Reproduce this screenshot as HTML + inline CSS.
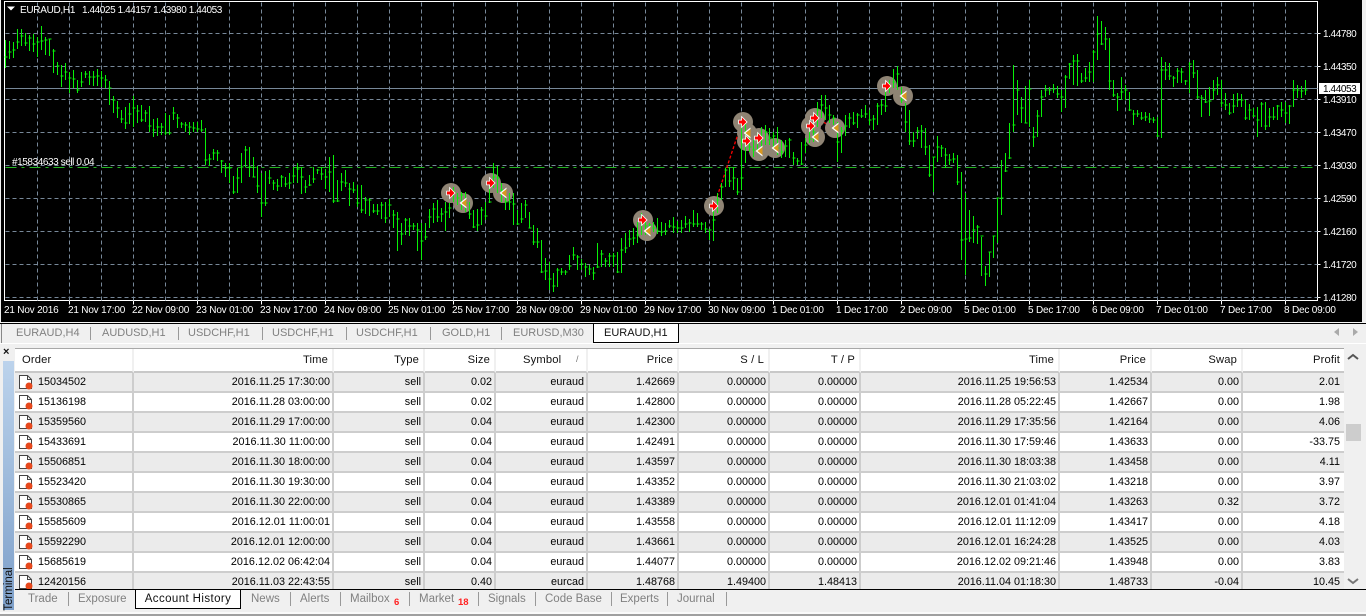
<!DOCTYPE html>
<html><head><meta charset="utf-8"><style>
html,body{margin:0;padding:0;width:1366px;height:616px;overflow:hidden;background:#f0f0f0;font-family:"Liberation Sans",sans-serif;position:relative}
.a{position:absolute}
.tt{position:absolute;top:325px;height:16px;line-height:16px;font-size:11px;color:#808080;white-space:nowrap}
.sp{position:absolute;width:1px;background:#999}
.bt{position:absolute;top:591px;height:16px;line-height:16px;font-size:11.5px;color:#808080;white-space:nowrap}
.red{position:absolute;color:#f22;font-weight:bold;font-size:9.5px;line-height:10px;top:598px}
table{border-collapse:separate;border-spacing:0;table-layout:fixed;font-size:10.8px;color:#000}
th{height:22px;font-weight:normal;text-align:right;padding:0 4px 0 0;border-right:2px solid #f0f0f0;border-bottom:2px solid #c8c8c8;box-sizing:content-box;font-size:11.2px;color:#111;background:#fff;letter-spacing:.15px;white-space:nowrap}
td{height:18px;line-height:18px;padding:0 2px 0 0;text-align:right;border-right:2px solid #cdcdcd;border-bottom:2px solid #cdcdcd;white-space:nowrap;overflow:hidden}
tr:nth-child(odd) td{background:#ebebeb}
tr:nth-child(even) td{background:#fff}
td:first-child{text-align:left;padding-left:23px;position:relative}
td svg{position:absolute;left:3px;top:1px}
</style></head><body>
<svg class="a" style="left:0;top:0" width="1366" height="324" viewBox="0 0 1366 324" font-family="'Liberation Sans',sans-serif">
<defs>
<g id="r"><path d="M-4-1.5h3v-3l4.5 4.5-4.5 4.5v-3h-3z" fill="#f00" stroke="#fff" stroke-width="1.6" paint-order="stroke"/></g>
<g id="o"><path d="M3.5-5.5-3.5 0 3.5 5.5z" fill="#fff"/><path d="M3.5-4-1.5 0 3.5 4z" fill="#d9981f"/></g>
</defs>
<rect x="1" y="0" width="1361" height="322" fill="#000"/>
<rect x="0" y="322" width="1366" height="1" fill="#f4f4f4"/>
<rect x="0" y="323" width="1366" height="1" fill="#000"/>
<g transform="translate(.5 .5)" fill="none">
<path d="M4 1H1317V300H4ZM69 300v4M133 300v4M197 300v4M261 300v4M325 300v4M389 300v4M453 300v4M517 300v4M581 300v4M645 300v4M709 300v4M773 300v4M837 300v4M901 300v4M965 300v4M1029 300v4M1093 300v4M1157 300v4M1221 300v4M1285 300v4M1317 33h3M1317 66h3M1317 99h3M1317 132h3M1317 165h3M1317 198h3M1317 231h3M1317 264h3M1317 297h3" stroke="#fff"/>
<path d="M5 33H1317M5 66H1317M5 99H1317M5 132H1317M5 165H1317M5 198H1317M5 231H1317M5 264H1317M5 297H1317M37 2V300M69 2V300M101 2V300M133 2V300M165 2V300M197 2V300M229 2V300M261 2V300M293 2V300M325 2V300M357 2V300M389 2V300M421 2V300M453 2V300M485 2V300M517 2V300M549 2V300M581 2V300M613 2V300M645 2V300M677 2V300M709 2V300M741 2V300M773 2V300M805 2V300M837 2V300M869 2V300M901 2V300M933 2V300M965 2V300M997 2V300M1029 2V300M1061 2V300M1093 2V300M1125 2V300M1157 2V300M1189 2V300M1221 2V300M1253 2V300M1285 2V300" stroke="#778899" stroke-dasharray="4 3"/>
<path d="M5 88H1317" stroke="#778899"/>
<path d="M5 167H1317" stroke="#22b522" stroke-dasharray="11 5 3 5"/>
</g>
<path d="M714 206 742 122M747 141 759 151M815 118 835 128M887 86 903 96M451 193 463 203M491 183 503 193M643 220 647 231M742 122 747 133M759 138 775 148" fill="none" stroke="#f00" stroke-width="1.3" stroke-dasharray="3 2"/>
<g fill="#8f8474"><circle cx="451" cy="193" r="10"/><circle cx="463" cy="203" r="10"/><circle cx="491" cy="183" r="10"/><circle cx="503" cy="193" r="10"/><circle cx="643" cy="220" r="10"/><circle cx="647" cy="231" r="10"/><circle cx="714" cy="206" r="10"/><circle cx="743" cy="122" r="10"/><circle cx="747" cy="133" r="10"/><circle cx="747" cy="141" r="10"/><circle cx="759" cy="138" r="10"/><circle cx="759" cy="151" r="10"/><circle cx="775" cy="148" r="10"/><circle cx="815" cy="118" r="10"/><circle cx="811" cy="126" r="10"/><circle cx="815" cy="137" r="10"/><circle cx="835" cy="128" r="10"/><circle cx="887" cy="86" r="10"/><circle cx="903" cy="96" r="10"/></g>
<path transform="translate(.5 0)" fill="none" stroke="#08f008" d="M5 40V68M4 57h3M9 41V59M8 52h3M13 42V58M12 50h3M17 29V49M16 42h3M21 29V46M20 36h3M25 33V46M24 43h3M29 35V51M28 38h3M33 34V52M32 44h3M37 37V57M36 42h3M41 26V50M40 41h3M45 37V55M44 40h3M49 39V56M48 39h3M53 49V73M52 51h3M57 62V75M56 66h3M61 65V87M60 76h3M65 63V80M64 72h3M69 72V93M68 78h3M73 70V88M72 79h3M77 80V93M76 90h3M81 72V87M80 82h3M85 71V78M84 74h3M89 71V85M88 77h3M93 71V86M92 77h3M97 69V86M96 76h3M101 71V87M100 78h3M105 75V88M104 80h3M109 81V105M108 88h3M113 96V113M112 100h3M117 101V118M116 108h3M121 110V123M120 119h3M125 107V129M124 123h3M129 103V124M128 114h3M133 96V127M132 108h3M137 105V123M136 111h3M141 105V122M140 120h3M145 110V122M144 113h3M149 106V132M148 126h3M153 119V137M152 130h3M157 118V136M156 127h3M161 123V135M160 127h3M165 113V135M164 133h3M169 115V135M168 133h3M173 107V120M172 113h3M177 114V128M176 118h3M181 122V128M180 124h3M185 122V132M184 125h3M189 122V135M188 127h3M193 122V132M192 128h3M197 122V132M196 129h3M201 120V132M200 130h3M205 128V165M204 160h3M209 154V166M208 159h3M213 149V160M212 153h3M217 150V161M216 153h3M221 160V173M220 161h3M225 163V177M224 168h3M229 163V183M228 168h3M233 176V194M232 192h3M237 168V193M236 178h3M241 153V183M240 167h3M245 146V167M244 150h3M249 147V177M248 167h3M253 157V177M252 177h3M257 166V193M256 186h3M261 173V217M260 203h3M265 171V206M264 203h3M269 170V184M268 178h3M273 180V190M272 183h3M277 179V191M276 186h3M281 175V187M280 177h3M285 177V187M284 184h3M289 173V189M288 183h3M293 167V183M292 176h3M297 163V183M296 169h3M301 167V194M300 177h3M305 180V193M304 187h3M309 175V186M308 185h3M313 167V183M312 179h3M317 169V174M316 170h3M321 167V180M320 174h3M325 169V189M324 177h3M329 157V192M328 172h3M333 155V203M332 201h3M337 180V202M336 201h3M341 173V191M340 182h3M345 170V187M344 183h3M349 183V206M348 189h3M353 182V193M352 190h3M357 185V207M356 203h3M361 185V213M360 210h3M365 197V214M364 200h3M369 198V216M368 200h3M373 204V213M372 211h3M377 204V215M376 211h3M381 202V219M380 205h3M385 202V223M384 218h3M389 199V217M388 205h3M393 210V228M392 215h3M397 212V251M396 219h3M401 223V245M400 234h3M405 218V235M404 220h3M409 218V236M408 226h3M413 223V230M412 226h3M417 223V251M416 230h3M421 223V260M420 241h3M425 223V240M424 237h3M429 209V228M428 217h3M433 203V223M432 209h3M437 200V222M436 217h3M441 208V222M440 214h3M445 202V231M444 212h3M449 203V218M448 208h3M453 187V202M452 192h3M457 193V205M456 198h3M461 192V210M460 195h3M465 192V212M464 203h3M469 202V219M468 214h3M473 210V228M472 227h3M477 209V231M476 225h3M481 207V225M480 210h3M485 202V220M484 216h3M489 183V203M488 202h3M493 163V188M492 177h3M497 166V193M496 178h3M501 183V202M500 190h3M505 193V210M504 202h3M509 193V210M508 202h3M513 193V225M512 204h3M517 210V225M516 224h3M521 203V223M520 219h3M525 200V218M524 205h3M529 212V228M528 228h3M533 225V245M532 242h3M537 228V248M536 242h3M541 240V273M540 272h3M545 258V280M544 271h3M549 262V290M548 279h3M553 273V292M552 286h3M557 268V287M556 270h3M561 268V275M560 272h3M565 270V275M564 272h3M569 255V270M568 266h3M573 247V260M572 255h3M577 255V270M576 257h3M581 259V270M580 264h3M585 263V277M584 267h3M589 265V275M588 269h3M593 267V280M592 273h3M597 243V268M596 267h3M601 250V267M600 254h3M605 258V267M604 261h3M609 253V267M608 256h3M613 253V267M612 256h3M617 252V273M616 272h3M621 238V273M620 250h3M625 233V253M624 248h3M629 230V247M628 239h3M633 228V245M632 238h3M637 222V243M636 235h3M641 213V235M640 224h3M645 222V235M644 226h3M649 223V233M648 225h3M653 222V232M652 228h3M657 218V234M656 231h3M661 222V236M660 232h3M665 223V235M664 231h3M669 220V228M668 226h3M673 217V233M672 227h3M677 221V233M676 228h3M681 220V233M680 228h3M685 216V228M684 224h3M689 219V232M688 223h3M693 210V227M692 224h3M697 213V227M696 224h3M701 222V230M700 224h3M705 222V233M704 229h3M709 229V240M708 230h3M713 207V241M712 220h3M717 193V213M716 200h3M721 183V200M720 187h3M725 168V187M724 170h3M729 167V187M728 181h3M733 167V190M732 178h3M737 178V195M736 192h3M741 123V190M740 178h3M745 123V163M744 143h3M749 137V152M748 147h3M753 140V157M752 150h3M757 133V150M756 140h3M761 127V150M760 138h3M765 125V145M764 132h3M769 128V145M768 138h3M773 132V148M772 136h3M777 127V155M776 148h3M781 140V158M780 152h3M785 140V157M784 146h3M789 138V158M788 140h3M793 152V165M792 158h3M797 158V165M796 161h3M801 142V165M800 164h3M805 138V153M804 145h3M809 130V143M808 139h3M813 123V142M812 132h3M817 102V127M816 110h3M821 95V118M820 105h3M825 95V120M824 108h3M829 105V123M828 115h3M833 115V125M832 118h3M837 122V162M836 142h3M841 127V153M840 131h3M845 115V136M844 126h3M849 113V128M848 118h3M853 112V125M852 123h3M857 113V128M856 115h3M861 109V118M860 116h3M865 105V118M864 114h3M869 110V125M868 120h3M873 115V130M872 119h3M877 103V125M876 106h3M881 100V115M880 105h3M885 90V112M884 106h3M889 80V93M888 86h3M893 69V88M892 82h3M897 66V90M896 74h3M901 87V103M900 100h3M905 103V132M904 122h3M909 110V145M908 141h3M913 132V147M912 141h3M917 127V139M916 131h3M921 125V148M920 131h3M925 128V155M924 147h3M929 145V177M928 175h3M933 157V192M932 157h3M937 136V162M936 147h3M941 145V157M940 148h3M945 148V168M944 155h3M949 154V165M948 160h3M953 153V163M952 159h3M957 155V185M956 182h3M961 172V260M960 240h3M965 193V275M964 239h3M969 210V242M968 238h3M973 216V243M972 230h3M977 225V244M976 227h3M981 237V276M980 236h3M985 266V286M984 274h3M989 252V277M988 252h3M993 236V258M992 236h3M997 198V243M996 198h3M1001 160V215M1000 198h3M1005 153V172M1004 171h3M1009 123V159M1008 158h3M1013 65V132M1012 125h3M1017 80V115M1016 90h3M1021 97V123M1020 108h3M1025 86V123M1024 123h3M1029 80V127M1028 89h3M1033 127V147M1032 137h3M1037 110V137M1036 116h3M1041 90V117M1040 97h3M1045 85V97M1044 90h3M1049 87V95M1048 90h3M1053 84V93M1052 89h3M1057 86V98M1056 94h3M1061 90V112M1060 97h3M1065 75V108M1064 77h3M1069 63V79M1068 64h3M1073 55V85M1072 61h3M1077 54V86M1076 61h3M1081 73V83M1080 81h3M1085 68V82M1084 78h3M1089 62V82M1088 72h3M1093 50V82M1092 52h3M1097 16V60M1096 34h3M1101 21V45M1100 44h3M1105 27V50M1104 39h3M1109 38V90M1108 81h3M1113 80V97M1112 95h3M1117 93V111M1116 97h3M1121 77V100M1120 92h3M1125 85V100M1124 90h3M1129 92V111M1128 110h3M1133 110V125M1132 114h3M1137 110V117M1136 114h3M1141 112V120M1140 118h3M1145 112V121M1144 117h3M1149 113V123M1148 119h3M1153 117V123M1152 120h3M1157 117V137M1156 136h3M1161 57V138M1160 70h3M1165 62V80M1164 70h3M1169 63V80M1168 76h3M1173 76V87M1172 78h3M1177 68V83M1176 71h3M1181 68V83M1180 72h3M1185 80V85M1184 81h3M1189 62V93M1188 64h3M1193 60V78M1192 73h3M1197 70V99M1196 97h3M1201 95V117M1200 98h3M1205 90V103M1204 102h3M1209 87V116M1208 101h3M1213 80V100M1212 90h3M1217 77V95M1216 85h3M1221 80V107M1220 103h3M1225 93V110M1224 105h3M1229 103V115M1228 113h3M1233 94V113M1232 106h3M1237 93V107M1236 100h3M1241 94V107M1240 100h3M1245 100V120M1244 118h3M1249 104V120M1248 110h3M1253 108V117M1252 116h3M1257 107V137M1256 120h3M1261 102V127M1260 104h3M1265 102V130M1264 126h3M1269 108V127M1268 117h3M1273 107V120M1272 117h3M1277 105V120M1276 106h3M1281 102V117M1280 110h3M1285 102V123M1284 113h3M1289 105V124M1288 106h3M1293 80V107M1292 90h3M1297 85V98M1296 90h3M1301 86V98M1300 91h3M1305 80V95M1304 90h3"/>
<use href="#r" x="451" y="193"/><use href="#o" x="463" y="203"/><use href="#r" x="491" y="183"/><use href="#o" x="503" y="193"/><use href="#r" x="643" y="220"/><use href="#o" x="647" y="231"/><use href="#r" x="714" y="206"/><use href="#r" x="743" y="122"/><use href="#o" x="747" y="133"/><use href="#r" x="747" y="141"/><use href="#r" x="759" y="138"/><use href="#o" x="759" y="151"/><use href="#o" x="775" y="148"/><use href="#r" x="815" y="118"/><use href="#r" x="811" y="126"/><use href="#o" x="815" y="137"/><use href="#o" x="835" y="128"/><use href="#r" x="887" y="86"/><use href="#o" x="903" y="96"/>
<path d="M7 6.5h8l-4 4z" fill="#fff"/>
<g fill="#fff" font-size="10" letter-spacing="-.3">
<text x="20" y="13">EURAUD,H1</text>
<text x="82" y="13" letter-spacing="-.42">1.44025 1.44157 1.43980 1.44053</text>
<text x="12" y="165" letter-spacing="-.42">#15834633 sell 0.04</text>
</g>
<g fill="#fff" font-size="10" letter-spacing="-.4">
<text x="1323" y="37">1.44780</text><text x="1323" y="70">1.44350</text><text x="1323" y="103">1.43910</text><text x="1323" y="136">1.43470</text><text x="1323" y="169">1.43030</text><text x="1323" y="202">1.42590</text><text x="1323" y="235">1.42160</text><text x="1323" y="268">1.41720</text><text x="1323" y="301">1.41280</text>
<rect x="1319" y="83" width="41" height="11" fill="#fff"/>
<text x="1323" y="92" fill="#000">1.44053</text>
</g>
<g fill="#fff" font-size="10" letter-spacing="-.2">
<text x="4" y="313">21 Nov 2016</text><text x="68" y="313">21 Nov 17:00</text><text x="132" y="313">22 Nov 09:00</text><text x="196" y="313">23 Nov 01:00</text><text x="260" y="313">23 Nov 17:00</text><text x="324" y="313">24 Nov 09:00</text><text x="388" y="313">25 Nov 01:00</text><text x="452" y="313">25 Nov 17:00</text><text x="516" y="313">28 Nov 09:00</text><text x="580" y="313">29 Nov 01:00</text><text x="644" y="313">29 Nov 17:00</text><text x="708" y="313">30 Nov 09:00</text><text x="772" y="313">1 Dec 01:00</text><text x="836" y="313">1 Dec 17:00</text><text x="900" y="313">2 Dec 09:00</text><text x="964" y="313">5 Dec 01:00</text><text x="1028" y="313">5 Dec 17:00</text><text x="1092" y="313">6 Dec 09:00</text><text x="1156" y="313">7 Dec 01:00</text><text x="1220" y="313">7 Dec 17:00</text><text x="1284" y="313">8 Dec 09:00</text>
</g>
</svg>

<div class="a" style="left:1px;top:324px;width:1px;height:19px;background:#888"></div>
<div class="a" style="left:0;top:343px;width:1366px;height:1px;background:#fff"></div>
<div class="tt" style="left:16px">EURAUD,H4</div><div class="sp" style="left:90px;top:327px;height:13px"></div>
<div class="tt" style="left:102px">AUDUSD,H1</div><div class="sp" style="left:178px;top:327px;height:13px"></div>
<div class="tt" style="left:188px">USDCHF,H1</div><div class="sp" style="left:262px;top:327px;height:13px"></div>
<div class="tt" style="left:272px">USDCHF,H1</div><div class="sp" style="left:346px;top:327px;height:13px"></div>
<div class="tt" style="left:356px">USDCHF,H1</div><div class="sp" style="left:430px;top:327px;height:13px"></div>
<div class="tt" style="left:442px">GOLD,H1</div><div class="sp" style="left:501px;top:327px;height:13px"></div>
<div class="tt" style="left:513px">EURUSD,M30</div>
<div class="a" style="left:593px;top:323px;width:84px;height:18px;background:#fff;border:1px solid #000;line-height:18px;font-size:11px;color:#111;text-indent:10px">EURAUD,H1</div>
<svg class="a" style="left:1330px;top:326px" width="32" height="12"><path d="M9 2 4 6l5 4z" fill="#aaa"/><path d="M23 2l5 4-5 4z" fill="#aaa"/></svg>

<div class="a" style="left:3px;top:346px;font-size:11px;font-weight:bold;line-height:12px;color:#111">×</div>
<div class="a" style="left:3px;top:361px;width:11px;height:249px;background:linear-gradient(#bcd3ec,#7d9fc9)"></div>
<div class="a" style="left:-13px;top:583px;width:44px;height:12px;line-height:12px;font-size:11.5px;color:#111;transform:rotate(-90deg);text-align:center">Terminal</div>

<div class="a" style="left:15px;top:348px;width:1329px;height:1px;background:#a8a8a8"></div>
<div class="a" style="left:15px;top:349px;width:1329px;height:240px;overflow:hidden;background:#fff">
<table style="width:1329px">
<colgroup><col style="width:119px"><col style="width:200px"><col style="width:91px"><col style="width:71px"><col style="width:92px"><col style="width:91px"><col style="width:91px"><col style="width:91px"><col style="width:199px"><col style="width:92px"><col style="width:91px"><col style="width:101px"></colgroup>
<thead><tr><th style="text-align:left;padding-left:7px">Order</th><th>Time</th><th>Type</th><th>Size</th><th style="text-align:left;padding-left:27px;position:relative">Symbol<span style="position:absolute;left:80px;font-size:9px;color:#777">/</span></th><th>Price</th><th>S / L</th><th>T / P</th><th>Time</th><th>Price</th><th>Swap</th><th style="border-right:0">Profit</th></tr></thead>
<tbody>
<tr><td><svg width="18" height="18"><path d="M1.5 1.5h8l4 4v9h-12z" fill="#fff" stroke="#444"/><path d="M9.5 1.5v4h4" fill="none" stroke="#444"/><circle cx="11" cy="12" r="3.5" fill="#e8481c"/></svg>15034502</td><td>2016.11.25 17:30:00</td><td>sell</td><td>0.02</td><td>euraud</td><td>1.42669</td><td>0.00000</td><td>0.00000</td><td>2016.11.25 19:56:53</td><td>1.42534</td><td>0.00</td><td style="padding-right:4px;border-right:0">2.01</td></tr>
<tr><td><svg width="18" height="18"><path d="M1.5 1.5h8l4 4v9h-12z" fill="#fff" stroke="#444"/><path d="M9.5 1.5v4h4" fill="none" stroke="#444"/><circle cx="11" cy="12" r="3.5" fill="#e8481c"/></svg>15136198</td><td>2016.11.28 03:00:00</td><td>sell</td><td>0.02</td><td>euraud</td><td>1.42800</td><td>0.00000</td><td>0.00000</td><td>2016.11.28 05:22:45</td><td>1.42667</td><td>0.00</td><td style="padding-right:4px;border-right:0">1.98</td></tr>
<tr><td><svg width="18" height="18"><path d="M1.5 1.5h8l4 4v9h-12z" fill="#fff" stroke="#444"/><path d="M9.5 1.5v4h4" fill="none" stroke="#444"/><circle cx="11" cy="12" r="3.5" fill="#e8481c"/></svg>15359560</td><td>2016.11.29 17:00:00</td><td>sell</td><td>0.04</td><td>euraud</td><td>1.42300</td><td>0.00000</td><td>0.00000</td><td>2016.11.29 17:35:56</td><td>1.42164</td><td>0.00</td><td style="padding-right:4px;border-right:0">4.06</td></tr>
<tr><td><svg width="18" height="18"><path d="M1.5 1.5h8l4 4v9h-12z" fill="#fff" stroke="#444"/><path d="M9.5 1.5v4h4" fill="none" stroke="#444"/><circle cx="11" cy="12" r="3.5" fill="#e8481c"/></svg>15433691</td><td>2016.11.30 11:00:00</td><td>sell</td><td>0.04</td><td>euraud</td><td>1.42491</td><td>0.00000</td><td>0.00000</td><td>2016.11.30 17:59:46</td><td>1.43633</td><td>0.00</td><td style="padding-right:4px;border-right:0">-33.75</td></tr>
<tr><td><svg width="18" height="18"><path d="M1.5 1.5h8l4 4v9h-12z" fill="#fff" stroke="#444"/><path d="M9.5 1.5v4h4" fill="none" stroke="#444"/><circle cx="11" cy="12" r="3.5" fill="#e8481c"/></svg>15506851</td><td>2016.11.30 18:00:00</td><td>sell</td><td>0.04</td><td>euraud</td><td>1.43597</td><td>0.00000</td><td>0.00000</td><td>2016.11.30 18:03:38</td><td>1.43458</td><td>0.00</td><td style="padding-right:4px;border-right:0">4.11</td></tr>
<tr><td><svg width="18" height="18"><path d="M1.5 1.5h8l4 4v9h-12z" fill="#fff" stroke="#444"/><path d="M9.5 1.5v4h4" fill="none" stroke="#444"/><circle cx="11" cy="12" r="3.5" fill="#e8481c"/></svg>15523420</td><td>2016.11.30 19:30:00</td><td>sell</td><td>0.04</td><td>euraud</td><td>1.43352</td><td>0.00000</td><td>0.00000</td><td>2016.11.30 21:03:02</td><td>1.43218</td><td>0.00</td><td style="padding-right:4px;border-right:0">3.97</td></tr>
<tr><td><svg width="18" height="18"><path d="M1.5 1.5h8l4 4v9h-12z" fill="#fff" stroke="#444"/><path d="M9.5 1.5v4h4" fill="none" stroke="#444"/><circle cx="11" cy="12" r="3.5" fill="#e8481c"/></svg>15530865</td><td>2016.11.30 22:00:00</td><td>sell</td><td>0.04</td><td>euraud</td><td>1.43389</td><td>0.00000</td><td>0.00000</td><td>2016.12.01 01:41:04</td><td>1.43263</td><td>0.32</td><td style="padding-right:4px;border-right:0">3.72</td></tr>
<tr><td><svg width="18" height="18"><path d="M1.5 1.5h8l4 4v9h-12z" fill="#fff" stroke="#444"/><path d="M9.5 1.5v4h4" fill="none" stroke="#444"/><circle cx="11" cy="12" r="3.5" fill="#e8481c"/></svg>15585609</td><td>2016.12.01 11:00:01</td><td>sell</td><td>0.04</td><td>euraud</td><td>1.43558</td><td>0.00000</td><td>0.00000</td><td>2016.12.01 11:12:09</td><td>1.43417</td><td>0.00</td><td style="padding-right:4px;border-right:0">4.18</td></tr>
<tr><td><svg width="18" height="18"><path d="M1.5 1.5h8l4 4v9h-12z" fill="#fff" stroke="#444"/><path d="M9.5 1.5v4h4" fill="none" stroke="#444"/><circle cx="11" cy="12" r="3.5" fill="#e8481c"/></svg>15592290</td><td>2016.12.01 12:00:00</td><td>sell</td><td>0.04</td><td>euraud</td><td>1.43661</td><td>0.00000</td><td>0.00000</td><td>2016.12.01 16:24:28</td><td>1.43525</td><td>0.00</td><td style="padding-right:4px;border-right:0">4.03</td></tr>
<tr><td><svg width="18" height="18"><path d="M1.5 1.5h8l4 4v9h-12z" fill="#fff" stroke="#444"/><path d="M9.5 1.5v4h4" fill="none" stroke="#444"/><circle cx="11" cy="12" r="3.5" fill="#e8481c"/></svg>15685619</td><td>2016.12.02 06:42:04</td><td>sell</td><td>0.04</td><td>euraud</td><td>1.44077</td><td>0.00000</td><td>0.00000</td><td>2016.12.02 09:21:46</td><td>1.43948</td><td>0.00</td><td style="padding-right:4px;border-right:0">3.83</td></tr>
<tr><td><svg width="18" height="18"><path d="M1.5 1.5h8l4 4v9h-12z" fill="#fff" stroke="#444"/><path d="M9.5 1.5v4h4" fill="none" stroke="#444"/><circle cx="11" cy="12" r="3.5" fill="#e8481c"/></svg>12420156</td><td>2016.11.03 22:43:55</td><td>sell</td><td>0.40</td><td>eurcad</td><td>1.48768</td><td>1.49400</td><td>1.48413</td><td>2016.11.04 01:18:30</td><td>1.48733</td><td>-0.04</td><td style="padding-right:4px;border-right:0">10.45</td></tr>
</tbody></table>
</div>

<div class="a" style="left:1344px;top:348px;width:19px;height:241px;background:#f0f0f0"></div>
<div class="a" style="left:1346px;top:424px;width:15px;height:17px;background:#cdcdcd"></div>
<svg class="a" style="left:1347px;top:353px" width="12" height="8"><path d="M1 6 6 2l5 4" fill="none" stroke="#555" stroke-width="2"/></svg>
<svg class="a" style="left:1347px;top:577px" width="12" height="8"><path d="M1 2 6 6l5-4" fill="none" stroke="#777" stroke-width="2"/></svg>

<div class="a" style="left:15px;top:589px;width:1351px;height:1px;background:#000"></div>
<div class="bt" style="left:28px">Trade</div><div class="sp" style="left:68px;top:592px;height:14px"></div>
<div class="bt" style="left:78px">Exposure</div>
<div class="a" style="left:135px;top:589px;width:104px;height:18px;background:#fff;border:1px solid #000;line-height:19px;font-size:11.5px;letter-spacing:.4px;color:#111;text-align:center">Account History</div>
<div class="bt" style="left:251px">News</div><div class="sp" style="left:290px;top:592px;height:14px"></div>
<div class="bt" style="left:300px">Alerts</div><div class="sp" style="left:340px;top:592px;height:14px"></div>
<div class="bt" style="left:350px">Mailbox</div><div class="red" style="left:394px">6</div><div class="sp" style="left:409px;top:592px;height:14px"></div>
<div class="bt" style="left:419px">Market</div><div class="red" style="left:458px">18</div><div class="sp" style="left:478px;top:592px;height:14px"></div>
<div class="bt" style="left:488px">Signals</div><div class="sp" style="left:535px;top:592px;height:14px"></div>
<div class="bt" style="left:545px">Code Base</div><div class="sp" style="left:611px;top:592px;height:14px"></div>
<div class="bt" style="left:620px">Experts</div><div class="sp" style="left:667px;top:592px;height:14px"></div>
<div class="bt" style="left:677px">Journal</div><div class="sp" style="left:726px;top:592px;height:14px"></div>
<div class="a" style="left:0;top:612px;width:1366px;height:2px;background:#fafafa"></div>
<div class="a" style="left:0;top:614px;width:1366px;height:2px;background:#a0a0a0"></div>
</body></html>
